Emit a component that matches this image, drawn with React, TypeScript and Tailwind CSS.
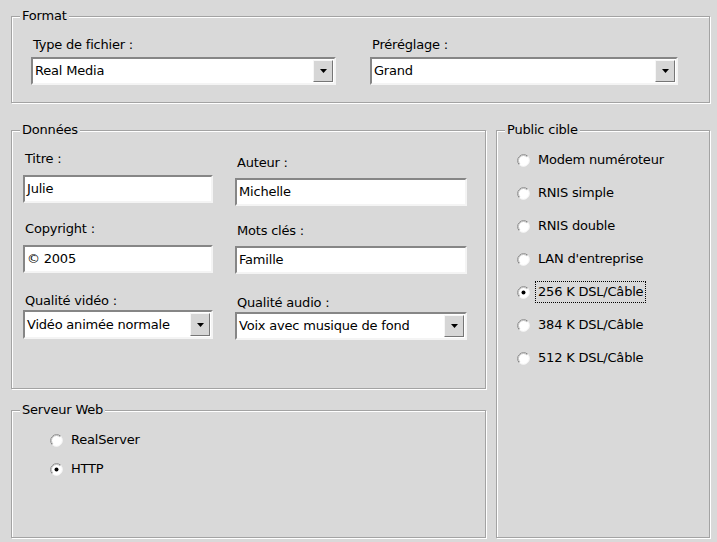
import React from "react";

function GroupBox({
  title,
  className,
  contentClass,
  children,
}: {
  title: string;
  className: string;
  contentClass: string;
  children?: React.ReactNode;
}) {
  return (
    <fieldset
      className={`border border-[#a3a3a3] shadow-[inset_1px_1px_0_#ffffff,1px_1px_0_#ffffff] ${className}`}
    >
      <legend className="ml-[8px] px-[2px] leading-[16px] bg-[#d9d9d9]">{title}</legend>
      <div className={contentClass}>{children}</div>
    </fieldset>
  );
}

function DropButton() {
  return (
    <div className="w-[20px] my-[1px] mr-[1px] flex items-center justify-center bg-[#d6d6d6] border border-t-[#f6f6f6] border-l-[#f6f6f6] border-b-[#767676] border-r-[#767676]">
      <svg width="7" height="4" viewBox="0 0 7 4">
        <polygon points="0,0 7,0 3.5,4" fill="#000000" />
      </svg>
    </div>
  );
}

function Combo({ value, className }: { value: string; className: string }) {
  return (
    <div
      className={`flex bg-white border-2 border-t-[#868686] border-l-[#868686] border-b-[#f4f4f4] border-r-[#f4f4f4] ${className}`}
    >
      <div className="flex-1 pl-[2px] flex items-center leading-[16px] whitespace-nowrap overflow-hidden">
        {value}
      </div>
      <DropButton />
    </div>
  );
}

function TextBox({ value, className }: { value: string; className: string }) {
  return (
    <div
      className={`flex items-center pl-[2px] bg-white border-2 border-t-[#868686] border-l-[#868686] border-b-[#f4f4f4] border-r-[#f4f4f4] leading-[16px] whitespace-nowrap ${className}`}
    >
      {value}
    </div>
  );
}

function RadioIcon({ checked }: { checked?: boolean }) {
  return (
    <svg width="13" height="13" viewBox="0 0 13 13" className="shrink-0">
      <circle cx="6.5" cy="6.5" r="6" fill="#ffffff" />
      <path d="M 2.26 10.74 A 6 6 0 0 1 10.74 2.26" stroke="#858585" strokeWidth="1" fill="none" />
      <path d="M 2.96 10.04 A 5 5 0 0 1 10.04 2.96" stroke="#bdbdbd" strokeWidth="1" fill="none" />
      <path d="M 10.74 2.26 A 6 6 0 0 1 2.26 10.74" stroke="#f2f2f2" strokeWidth="1" fill="none" />
      {checked && <circle cx="6.5" cy="6.5" r="2" fill="#000000" />}
    </svg>
  );
}

function Radio({ label, checked, focused }: { label: string; checked?: boolean; focused?: boolean }) {
  return (
    <div className="flex items-center gap-[8px] h-[16px] leading-[16px] whitespace-nowrap">
      <RadioIcon checked={checked} />
      <span className={focused ? "outline-1 outline-dotted outline-black outline-offset-[2px]" : ""}>
        {label}
      </span>
    </div>
  );
}

function Label({ text, className }: { text: string; className: string }) {
  return <div className={`leading-[16px] h-[16px] pl-[2px] whitespace-nowrap ${className}`}>{text}</div>;
}

export default function App() {
  return (
    <div className="w-[717px] h-[542px] overflow-hidden bg-[#d9d9d9] pt-[8px] pl-[11px] pr-[7px] text-[13px] tracking-[-0.2px] text-black font-['DejaVu_Sans',sans-serif]">
      <GroupBox title="Format" className="w-full" contentClass="flex pl-[19px] pt-[13px] pb-[17px]">
        <div className="w-[305px] flex flex-col">
          <Label text="Type de fichier :" className="" />
          <Combo value="Real Media" className="mt-[4px] h-[28px]" />
        </div>
        <div className="w-[308px] ml-[34px] flex flex-col">
          <Label text="Préréglage :" className="" />
          <Combo value="Grand" className="mt-[4px] h-[28px]" />
        </div>
      </GroupBox>

      <div className="mt-[19px] flex gap-[10px]">
        <div className="w-[475px] flex flex-col">
          <GroupBox title="Données" className="h-[267px]" contentClass="flex pl-[11px]">
            <div className="w-[190px] flex flex-col pt-[13px]">
              <Label text="Titre :" className="" />
              <TextBox value="Julie" className="mt-[8px] h-[28px]" />
              <Label text="Copyright :" className="mt-[18px]" />
              <TextBox value="© 2005" className="mt-[8px] h-[28px]" />
              <Label text="Qualité vidéo :" className="mt-[20px]" />
              <Combo value="Vidéo animée normale" className="mt-[1px] h-[29px]" />
            </div>
            <div className="w-[232px] ml-[22px] flex flex-col pt-[17px]">
              <Label text="Auteur :" className="" />
              <TextBox value="Michelle" className="mt-[7px] h-[28px]" />
              <Label text="Mots clés :" className="mt-[17px]" />
              <TextBox value="Famille" className="mt-[7px] h-[28px]" />
              <Label text="Qualité audio :" className="mt-[21px]" />
              <Combo value="Voix avec musique de fond" className="mt-[1px] h-[28px]" />
            </div>
          </GroupBox>

          <GroupBox
            title="Serveur Web"
            className="mt-[13px] h-[136px]"
            contentClass="flex flex-col gap-[13px] pl-[38px] pt-[14px]"
          >
            <Radio label="RealServer" />
            <Radio label="HTTP" checked />
          </GroupBox>
        </div>

        <GroupBox
          title="Public cible"
          className="w-[214px] h-[416px]"
          contentClass="flex flex-col gap-[17px] pl-[20px] pt-[14px]"
        >
          <Radio label="Modem numéroteur" />
          <Radio label="RNIS simple" />
          <Radio label="RNIS double" />
          <Radio label="LAN d'entreprise" />
          <Radio label="256 K DSL/Câble" checked focused />
          <Radio label="384 K DSL/Câble" />
          <Radio label="512 K DSL/Câble" />
        </GroupBox>
      </div>
    </div>
  );
}
